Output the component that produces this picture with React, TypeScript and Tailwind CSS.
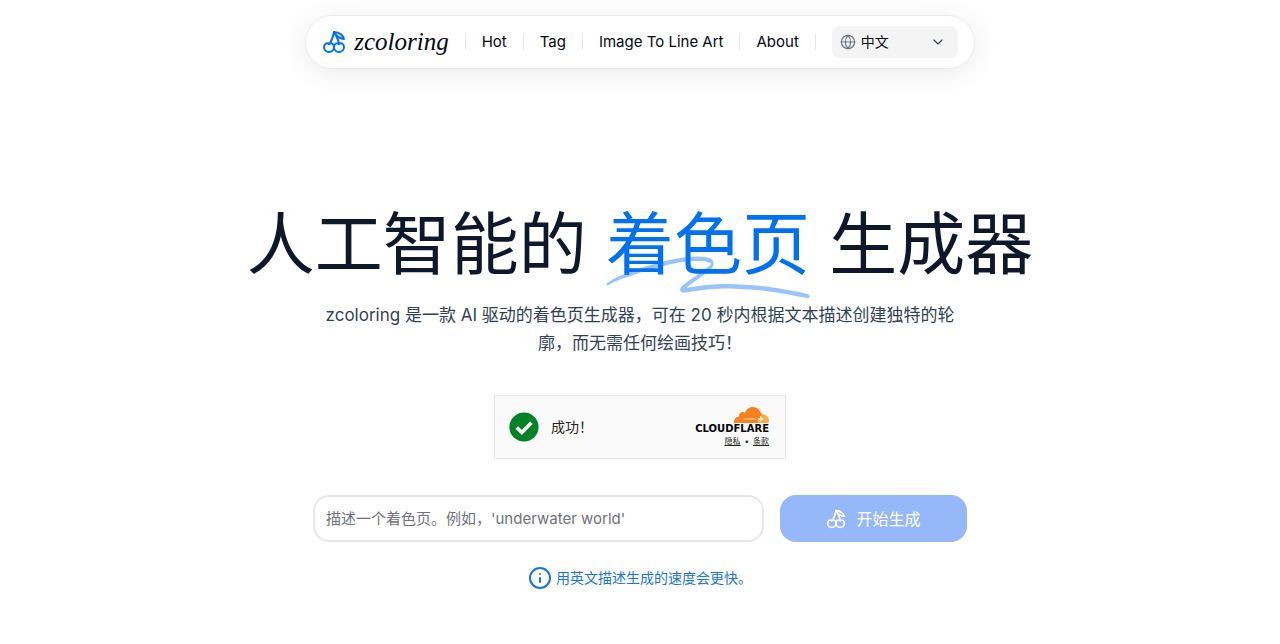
import { Cherry, ChevronDown, Globe, Info } from "lucide-react";

const navLinks = [
  { label: "Hot", href: "#hot" },
  { label: "Tag", href: "#tag" },
  { label: "Image To Line Art", href: "#line-art" },
  { label: "About", href: "#about" },
];

function Divider() {
  return <span className="h-4 w-px bg-gray-200" />;
}

// Language picker at the end of the nav
function LanguageSelect() {
  return (
    <div className="relative flex items-center">
      <Globe className="pointer-events-none absolute left-2 size-4 text-gray-500" strokeWidth={1.75} />
      <select
        aria-label="Language"
        className="h-8 w-[126px] appearance-none rounded-lg bg-zinc-100 pr-8 pl-[29px] text-sm text-gray-950"
        defaultValue="zh"
      >
        <option value="zh">中文</option>
        <option value="en">English</option>
      </select>
      <ChevronDown className="pointer-events-none absolute right-3 size-4 text-gray-700" strokeWidth={1.75} />
    </div>
  );
}

function Header() {
  return (
    <header className="flex justify-center pt-4">
      <nav className="flex h-13 items-center gap-4 rounded-full bg-white px-4 shadow-[0_4px_28px_rgba(0,0,0,0.09)] ring-1 ring-gray-200/70">
        <a href="#home" className="flex items-center gap-2">
          <Cherry className="size-6 text-[#0070f3]" />
          <span className="font-['Liberation_Serif',serif] text-[25px] leading-8 text-gray-950 italic">
            zcoloring
          </span>
        </a>
        {navLinks.map((link) => (
          <div key={link.label} className="flex items-center gap-4">
            <Divider />
            <a href={link.href} className="text-[15px] text-gray-950">
              {link.label}
            </a>
          </div>
        ))}
        <Divider />
        <LanguageSelect />
      </nav>
    </header>
  );
}

// Hand drawn underline below the highlighted word
function Swoosh() {
  return (
    <svg
      aria-hidden="true"
      viewBox="0 0 418 42"
      preserveAspectRatio="none"
      className="absolute top-2/3 left-0 h-[42px] w-full fill-[#99c4fa]"
    >
      <path d="M203.371.916c-26.013-2.078-76.686 1.963-124.73 9.946L67.3 12.749C35.421 18.062 18.2 21.766 6.004 25.934 1.244 27.561.828 27.778.874 28.61c.07 1.214.828 1.121 9.595-1.176 9.072-2.377 17.15-3.92 39.246-7.496C123.565 7.986 157.869 4.492 195.942 5.046c7.461.108 19.25 1.696 19.17 2.582-.107 1.183-7.874 4.31-25.75 10.366-21.992 7.45-35.43 12.534-36.701 13.884-2.173 2.308-.202 4.407 4.442 4.734 2.654.187 3.263.157 15.593-.78 35.401-2.686 57.944-3.488 88.365-3.143 46.327.526 75.721 2.23 130.788 7.584 19.787 1.924 20.814 1.98 24.557 1.332l.066-.011c1.201-.203 1.53-1.825.399-2.335-2.911-1.31-4.893-1.604-22.048-3.261-57.509-5.556-87.871-7.36-132.059-7.842-23.239-.254-33.617-.116-50.627.674-11.629.54-42.371 2.494-46.696 2.967-2.359.259 8.133-3.625 26.504-9.81 23.239-7.825 27.934-10.149 28.304-14.005.417-4.348-3.529-6-16.878-7.066Z" />
    </svg>
  );
}

function Cloud() {
  return (
    <svg aria-hidden="true" viewBox="0 6.5 24 11" className="h-4 w-[35px]">
      <path fill="#f6821f" d="M14 8l5.2 3.2v3l-3 1.4-1.8-1.4z" />
      <path
        fill="#f6821f"
        d="M16.5088 16.8447c.1475-.5068.0908-.9707-.1553-1.3154-.2246-.3164-.6045-.499-1.0615-.5205l-8.6592-.1123a.1559.1559 0 0 1-.1333-.0713c-.0283-.042-.0351-.0986-.021-.1553.0278-.084.1123-.1484.2036-.1562l8.7359-.1123c1.0351-.0489 2.1601-.8868 2.5537-1.9136l.499-1.3013c.0215-.0561.0293-.1128.0147-.168-.5625-2.5463-2.835-4.4453-5.5499-4.4453-2.5039 0-4.6284 1.6177-5.3876 3.8614-.4927-.3658-1.1187-.5625-1.794-.499-1.2026.119-2.1665 1.083-2.2861 2.2856-.0283.31-.0069.6128.0635.894C1.5683 13.171 0 14.7754 0 16.752c0 .1748.0142.3515.0352.5273.0141.083.0844.1475.1689.1475h15.9814c.0909 0 .1758-.0645.2032-.1553l.12-.4268z"
      />
      <path
        fill="#fbad41"
        d="M19.2656 11.2813c-.0771 0-.1611 0-.2383.0112-.0566 0-.1054.0415-.127.0976l-.3378 1.1744c-.1475.5068-.0918.9707.1543 1.3164.2256.3164.6055.498 1.0625.5195l1.8437.1133c.0557 0 .1055.0263.1329.0703.0283.043.0351.1074.0214.1562-.0283.084-.1132.1485-.204.1553l-1.921.1123c-1.041.0488-2.1582.8867-2.5527 1.914l-.1406.3585c-.0283.0713.0215.1416.0986.1416h6.5977c.0771 0 .1474-.0489.169-.126.1122-.4082.1757-.837.1757-1.2803 0-2.6025-2.125-4.727-4.7344-4.727"
      />
      <path fill="#fbad41" d="M16 17.4l2-3.4h5v3.4z" />
      <path fill="#fff" d="M18.3 12.4l.6 1.6 1.7.6-1.7.6-.6 1.6-.6-1.6-1.7-.6 1.7-.6z" />
    </svg>
  );
}

// Human check widget
function Turnstile() {
  return (
    <div className="flex h-16 w-[292px] items-center justify-between border border-gray-200 bg-[#fafafa] pr-4 pl-3.5">
      <div className="flex items-center gap-3">
        <svg aria-hidden="true" viewBox="0 0 30 30" className="size-[30px]">
          <circle cx="15" cy="15" r="14.6" fill="#038127" />
          <path d="M7.8 15.5l5 5 9.6-9.8" fill="none" stroke="#fff" strokeWidth="3.6" />
        </svg>
        <span className="text-sm text-[#232323]">成功！</span>
      </div>
      <div className="flex flex-col items-end">
        <Cloud />
        <span className="font-['DejaVu_Sans',sans-serif] text-[10px] leading-3 font-bold text-black">
          CLOUDFLARE
        </span>
        <div className="flex gap-1 text-[8px] leading-3 text-[#232323]">
          <a href="#privacy" className="underline">隐私</a>
          <span>•</span>
          <a href="#terms" className="underline">条款</a>
        </div>
      </div>
    </div>
  );
}

function PromptForm() {
  return (
    <form className="flex w-full max-w-[654px] gap-4" onSubmit={(e) => e.preventDefault()}>
      <input
        type="text"
        aria-label="描述一个着色页"
        placeholder="描述一个着色页。例如，'underwater world'"
        className="h-[47px] min-w-0 flex-1 rounded-2xl border-2 border-gray-200 bg-white px-[11px] text-[15px] text-gray-900 placeholder:text-zinc-500"
      />
      <button
        type="submit"
        className="flex h-[47px] w-[187px] items-center justify-center gap-2.5 rounded-2xl bg-[#96b8f8] text-base text-white"
      >
        <Cherry className="size-5" />
        开始生成
      </button>
    </form>
  );
}

function Hero() {
  return (
    <main className="flex flex-col items-center px-4 pt-[140px] text-center">
      <h1 className="text-[68px] leading-[72px] text-slate-900">
        人工智能的{" "}
        <span className="relative inline-block whitespace-nowrap text-[#0070f3]">
          <Swoosh />
          <span className="relative">着色页</span>
        </span>{" "}
        生成器
      </h1>
      <p className="mt-[21px] max-w-[640px] text-[17px] leading-7 text-slate-700">
        zcoloring 是一款 AI 驱动的着色页生成器，可在 20 秒内根据文本描述创建独特的轮廓，而无需任何绘画技巧！
      </p>
      <div className="mt-[38px]">
        <Turnstile />
      </div>
      <div className="mt-9 flex w-full justify-center">
        <PromptForm />
      </div>
      <p className="mt-6 flex items-center gap-1 text-sm text-[#1a73e0]">
        <Info className="size-6" />
        用英文描述生成的速度会更快。
      </p>
    </main>
  );
}

export default function App() {
  return (
    <div className="min-h-screen bg-white font-[Inter,'Noto_Sans_CJK_SC',sans-serif]" lang="zh-CN">
      <Header />
      <Hero />
    </div>
  );
}
